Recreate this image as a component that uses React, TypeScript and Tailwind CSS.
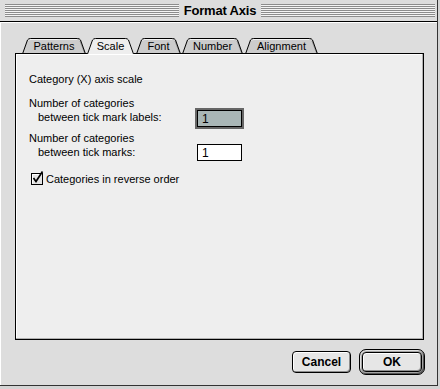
import React from 'react';

const tabs = [
  { label: 'Patterns', w: 64, cls: 'w-[64px]' },
  { label: 'Scale', w: 47, cls: 'w-[47px] ml-[1px]', active: true },
  { label: 'Font', w: 45, cls: 'w-[45px] ml-[2px]' },
  { label: 'Number', w: 61, cls: 'w-[61px] ml-[1px]' },
  { label: 'Alignment', w: 73, cls: 'w-[73px] ml-[2px]' },
];

const Tab: React.FC<{ label: string; w: number; cls: string; active?: boolean }> = ({ label, w, cls, active }) => (
  <div className={`relative h-[16px] flex items-center justify-center ${cls}`}>
    <svg className="absolute inset-0" width={w} height={16} viewBox={`0 0 ${w} 16`}>
      <path d={`M0 16 L5 2 Q6 0 8.5 0 H${w - 8.5} Q${w - 6} 0 ${w - 5} 2 L${w} 16 Z`} fill={active ? '#eeeeee' : '#cccccc'} />
      {!active && <path d={`M6.5 2.5 Q7.5 1.5 9 1.5 H${w - 9}`} stroke="#f2f2f2" fill="none" />}
      {!active && <path d={`M${w - 6} 3 L${w - 1.5} 15`} stroke="#999999" fill="none" />}
      <path
        d={`M0.5 16 L5.5 2 Q6.5 0.5 8.5 0.5 H${w - 8.5} Q${w - 6.5} 0.5 ${w - 5.5} 2 L${w - 0.5} 16`}
        stroke="#000"
        fill="none"
      />
      {!active && <path d={`M0 15.5 H${w}`} stroke="#000" />}
    </svg>
    <span className="relative text-[11px] leading-[14px] text-black mt-[-1px]">{label}</span>
  </div>
);

const Stripes: React.FC<{ cls: string }> = ({ cls }) => (
  <div className={`h-[13px] bg-[repeating-linear-gradient(to_bottom,#8c8c8c_0px,#8c8c8c_1px,#f4f4f4_1px,#f4f4f4_2px)] ${cls}`} />
);

const Field: React.FC<{ focused?: boolean; cls: string }> = ({ focused, cls }) => (
  <div
    className={`w-[45px] h-[17px] border border-black flex items-center pl-[4px] text-[12px] leading-[14px] ${
      focused ? 'bg-[#a9b6b6] outline-2 outline-[#666666]' : 'bg-white'
    } ${cls}`}
  >
    1
  </div>
);

export default function App() {
  return (
    <div className="w-[440px] h-[389px] bg-[#d4d4d4] font-['Liberation_Sans',Arial,sans-serif] text-black">
      <div className="w-[438px] h-[386px] bg-[#dddddd] border-r border-b border-[#333333] flex flex-col">
        <div className="h-[22px] border-b border-black flex items-center pl-[5px] pr-[2px] shrink-0">
          <Stripes cls="w-[174px]" />
          <div className="flex-1 text-center font-bold text-[13px] leading-[16px] tracking-[-0.2px]">Format Axis</div>
          <Stripes cls="w-[174px]" />
        </div>

        <div className="flex-1 flex flex-col pl-[14px] pr-[13px] pt-[15px] border-l border-t border-white">
          <div className="relative z-10 flex items-end h-[16px] mb-[-1px] pl-[7px]">
            {tabs.map((t) => (
              <Tab key={t.label} {...t} />
            ))}
          </div>

          <div className="h-[287px] border border-black bg-[#eeeeee] shadow-[inset_-1px_-1px_0_#b0b0b0,inset_1px_1px_0_#ffffff] pt-[18px] pl-[13px] text-[11px] leading-[14px]">
            <p>Category (X) axis scale</p>

            <div className="flex mt-[10px]">
              <div className="w-[168px]">
                <p>Number of categories</p>
                <p className="pl-[9px]">between tick mark labels:</p>
              </div>
              <Field focused cls="mt-[14px]" />
            </div>

            <div className="flex mt-[4px]">
              <div className="w-[168px]">
                <p>Number of categories</p>
                <p className="pl-[9px]">between tick marks:</p>
              </div>
              <Field cls="mt-[13px]" />
            </div>

            <div className="flex items-start mt-[11px] ml-[2px]">
              <svg className="mt-[-1px]" width="14" height="14" viewBox="0 0 14 14">
                <rect x="0.5" y="2.5" width="11" height="11" fill="#e4e4e4" stroke="#000" />
                <path d="M1.5 12.5 V3.5 H10.5" stroke="#ffffff" fill="none" />
                <path d="M2.5 7 L5 10.5 L11.5 0.5" stroke="#000" strokeWidth="1.7" fill="none" />
              </svg>
              <span className="ml-[1px]">Categories in reverse order</span>
            </div>
          </div>

          <div className="flex justify-end items-center gap-[8px] mt-[9px] mr-[-1px]">
            <button className="w-[59px] h-[22px] rounded-[4px] border border-black bg-[#e6e6e6] shadow-[inset_1px_1px_0_#ffffff,inset_-1px_-1px_0_#8e8e8e] font-bold text-[12px] leading-[14px]">
              Cancel
            </button>
            <div className="w-[66px] h-[26px] rounded-[7px] border border-black bg-[#a4a4a4] shadow-[inset_1px_1px_0_#e0e0e0,inset_-1px_-1px_0_#555555] p-[2px] flex">
              <button className="flex-1 rounded-[4px] border border-black bg-[#e6e6e6] shadow-[inset_1px_1px_0_#ffffff,inset_-1px_-1px_0_#8e8e8e] font-bold text-[12px] leading-[14px]">
                OK
              </button>
            </div>
          </div>
        </div>
      </div>
    </div>
  );
}
